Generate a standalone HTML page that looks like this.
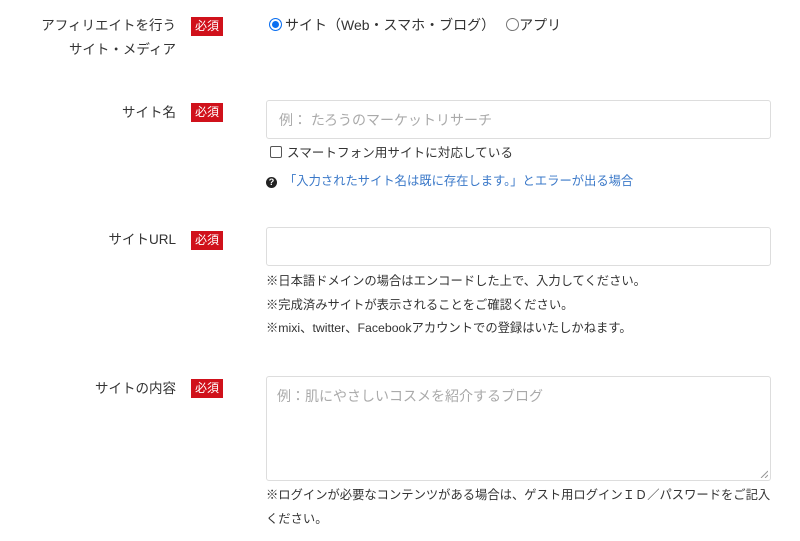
<!DOCTYPE html>
<html><head><meta charset="utf-8"><style>
*{margin:0;padding:0;box-sizing:border-box}
body{width:800px;height:541px;background:#fff;font-family:"Liberation Sans","Noto Sans CJK JP",sans-serif;color:#333;position:relative;overflow:hidden;font-size:14px}
.a{position:absolute;white-space:nowrap}
.lbl{position:absolute;right:624px;text-align:right;line-height:24px;font-size:13.5px}
.b{position:absolute;left:191px;width:32px;height:19px;background:#d0111b;color:#fff;font-size:12px;line-height:19px;text-align:center}
.in{position:absolute;left:266px;width:505px;border:1px solid #ddd;border-radius:3px}
.ph{color:#aaa;font-size:14px}
.n{font-size:12.3px;line-height:16px}
</style></head><body>
<div class="lbl" style="top:14px">アフィリエイトを行う<br>サイト・メディア</div>
<div class="b" style="top:17px">必須</div>
<div class="a" style="left:269px;top:16px;line-height:18px">
<span style="display:inline-block;width:13px;height:13px;border-radius:50%;background:#0b6ff0;border:1px solid #0b6ff0;box-shadow:inset 0 0 0 2px #fff;vertical-align:-1px;margin-right:3px"></span>サイト（Web・スマホ・ブログ）<span style="display:inline-block;width:13px;height:13px;border-radius:50%;border:1px solid #777;vertical-align:-1px;margin-left:11px"></span>アプリ</div>

<div class="lbl" style="top:101px">サイト名</div>
<div class="b" style="top:103px">必須</div>
<div class="in" style="top:100px;height:39px"><span class="a ph" style="left:12px;top:9px">例： たろうのマーケットリサーチ</span></div>
<div class="a" style="left:270px;top:144px;line-height:18px;font-size:12.6px"><span style="display:inline-block;width:12px;height:12px;border:1px solid #555;border-radius:2px;vertical-align:-1px;margin-right:5px"></span>スマートフォン用サイトに対応している</div>
<div class="a" style="left:266px;top:173px;font-size:12.3px;line-height:16px;color:#3a78c8"><span style="display:inline-block;width:11px;height:11px;border-radius:50%;background:#222;color:#fff;font-size:9px;line-height:11px;text-align:center;font-weight:bold;vertical-align:0;margin-right:7px">?</span>「入力されたサイト名は既に存在します。」とエラーが出る場合</div>

<div class="lbl" style="top:228px">サイトURL</div>
<div class="b" style="top:231px">必須</div>
<div class="in" style="top:227px;height:39px"></div>
<div class="a n" style="left:266px;top:273px">※日本語ドメインの場合はエンコードした上で、入力してください。</div>
<div class="a n" style="left:266px;top:297px">※完成済みサイトが表示されることをご確認ください。</div>
<div class="a n" style="left:266px;top:320px">※mixi、twitter、Facebookアカウントでの登録はいたしかねます。</div>

<div class="lbl" style="top:377px">サイトの内容</div>
<div class="b" style="top:379px">必須</div>
<div class="in" style="top:376px;height:105px"><span class="a ph" style="left:10px;top:9px">例：肌にやさしいコスメを紹介するブログ</span>
<svg class="a" style="right:2px;bottom:2px" width="8" height="8"><path d="M1 8L8 1M5 8L8 5" stroke="#999" stroke-width="1"/></svg></div>
<div class="a n" style="left:266px;top:487px">※ログインが必要なコンテンツがある場合は、ゲスト用ログインＩＤ／パスワードをご記入</div>
<div class="a n" style="left:266px;top:511px">ください。</div>
</body></html>
